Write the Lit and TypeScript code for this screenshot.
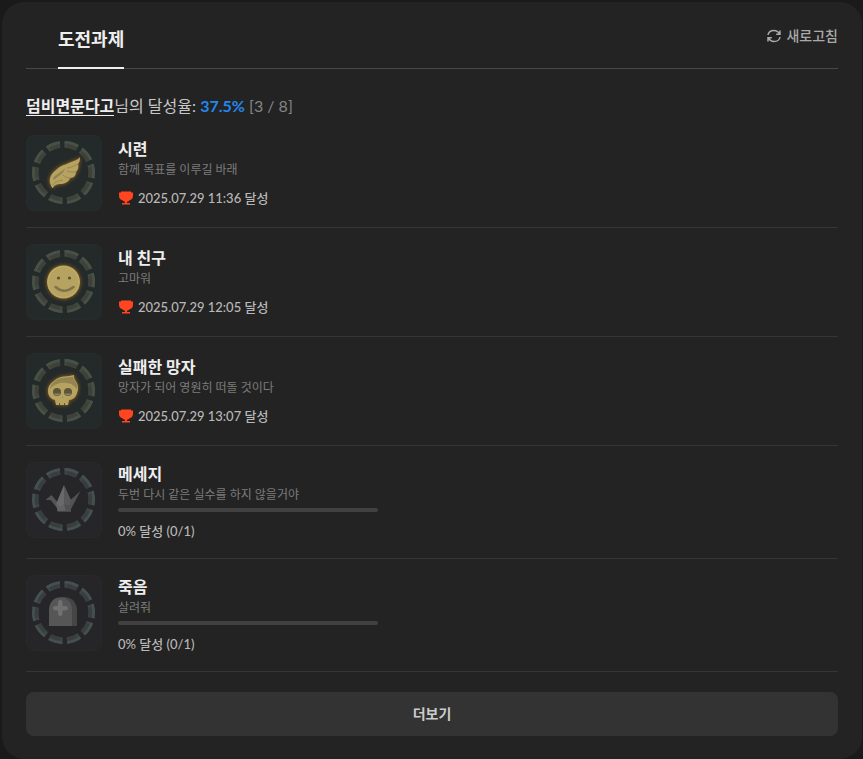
import { LitElement, html, svg, css, nothing } from "lit";
import { customElement, property, state } from "lit/decorators.js";
import { classMap } from "lit/directives/class-map.js";

type Emblem = "wing" | "smile" | "skull" | "crane" | "tomb";

interface Achievement {
  title: string;
  note: string;
  emblem: Emblem;
  achievedAt?: string;
  progress?: number;
  goal?: number;
}

const point = (radius: number, degrees: number) => {
  const a = (degrees * Math.PI) / 180;
  return `${(37.5 + radius * Math.cos(a)).toFixed(2)} ${(37.5 + radius * Math.sin(a)).toFixed(2)}`;
};

const arcBand = (inner: number, outer: number, from: number, to: number) =>
  `M${point(outer, from)}A${outer} ${outer} 0 0 1 ${point(outer, to)}` +
  `L${point(inner, to)}A${inner} ${inner} 0 0 0 ${point(inner, from)}Z`;

const segments = Array.from({ length: 10 }, (_, i) => i * 36 - 92);

const emblems = {
  wing: svg`
    <path class="gold" d="M54 22C52 25 47 26 43 28C38 30 34 31 30 35C25 39 23 43 24 48C25 51 26 53 27 53C28 50 31 49 34 49C38 49 43 47 44 43C48 43 50 40 50 37C52 35 53 32 52 29C54 27 54 24 54 22Z"/>
    <path class="shade" d="M27 43C30 39 36 37 39 33C38 39 32 41 28 45Z"/>
    <path class="vein" d="M52 29C48 31 44 33 41 33M50 37C46 37 44 37 41 36M44 43C41 43 39 42 37 40M27 50C29 46 33 46 37 45"/>`,
  smile: svg`
    <circle class="gold" cx="37.500" cy="38" r="16.500"/>
    <circle class="rim" cx="37.500" cy="38" r="15.500"/>
    <circle class="ink" cx="32.500" cy="34" r="1.600"/><circle class="ink" cx="43.500" cy="34" r="1.600"/>
    <path class="mouth" d="M29.500 43Q38 50.500 47.500 43"/>`,
  skull: svg`
    <path class="gold" d="M48 22C42 24 35 22 29 27C25 30 22 33 22 38C22 43 25 46 29 47L30 52H33V50H34V52H38V50H39V52H42L43 47C47 47 50 44 51 40C53 35 52 31 49 27C48 25 48 24 48 22Z"/>
    <path class="shade" d="M47 23.500C42 25 35 23.500 29 28C26 30 24 33 24 36C28 31 35 29 40 30C45 30 49 33 51 36C52 32 50 29 48 27Z"/>
    <circle class="ink" cx="31" cy="39" r="4"/><circle class="ink" cx="42" cy="39" r="4"/>
    <path class="shade" d="M27.500 40.500A4 4 0 0 0 34.500 40.500ZM38.500 40.500A4 4 0 0 0 45.500 40.500ZM36 45L36.700 43L37.400 45Z"/>`,
  crane: svg`
    <path fill="#545454" d="M19.500 38L25.500 33L33 42L31 46L24.500 38Z"/>
    <path fill="#525252" d="M40 42L54.500 29L45 47L41 49Z"/>
    <path fill="#696969" d="M38 23L30 42L32 48L38 43Z"/>
    <path fill="#585858" d="M38 23L45 38L44 43L38 43Z"/>
    <path fill="#626262" d="M30 41L34 45L38 42L44 46L45 49.500H31.500Z"/>
    <path fill="#515151" d="M38 42L45 46V49.500H40Z"/>`,
  tomb: svg`
    <path fill="#454545" d="M36 22C45 21 51 27 51 35V51H36Z"/>
    <path fill="#565656" d="M23 51V35C23 18 46 18 46 35V51Z"/>
    <path fill="#707070" d="M34 25Q36.500 25 36.500 28V31H39Q42 31 42 33Q42 35.500 39 35.500H36.500V38Q36.500 41 34 41Q32 41 32 38V35.500H30Q27 35.500 27 33Q27 31 30 31H32V28Q32 25 34 25Z"/>`,
};

@customElement("achievement-badge")
class AchievementBadge extends LitElement {
  @property() emblem: Emblem = "wing";
  @property({ type: Boolean }) earned = false;

  static styles = css`
    :host { display: block; flex: none; width: 76px; height: 76px; }
    .badge { display: block; width: 100%; height: 100%; border-radius: 8px; background: #262527; box-shadow: inset 0 0 0 1px #29282a; }
    .badge.earned { background: #242a2a; box-shadow: inset 0 0 0 1px #262c2c; }
    .slab { fill: #3e4646; }
    .core { fill: #393d3d; }
    .light { fill: #455050; }
    .earned .slab { fill: #414a40; }
    .earned .core { fill: #403f3a; }
    .earned .light { fill: #475247; }
    .earned .figure { filter: drop-shadow(0 0 2px #a36d18); }
    .gold { fill: #b7a361; }
    .shade { fill: #938452; }
    .vein { fill: none; stroke: #968753; stroke-width: 1; }
    .rim { fill: none; stroke: #c3ad68; stroke-width: 1; }
    .ink { fill: #5c5439; }
    .mouth { fill: none; stroke: #807349; stroke-width: 2.5; stroke-linecap: round; }
  `;

  render() {
    return html`<svg class=${classMap({ badge: true, earned: this.earned })} viewBox="0 0 76 76" aria-hidden="true">
      ${segments.map(
        (a) => svg`
          <path class="slab" d=${arcBand(25, 31.5, a + 4, a + 31)}/>
          <path class="light" d=${arcBand(29, 31.5, a + 4, a + 31)}/>
          <path class="core" d=${arcBand(25.5, 28.5, a + 9, a + 30)}/>`
      )}
      <g class="figure">${emblems[this.emblem]}</g>
    </svg>`;
  }
}

@customElement("achievement-row")
class AchievementRow extends LitElement {
  @property({ attribute: false }) item!: Achievement;

  static styles = css`
    :host { display: block; }
    .row { display: flex; gap: 16px; padding: 16px 0; border-bottom: 1px solid #363636; }
    .body { flex: 1; min-width: 0; }
    .body.earned { align-self: center; }
    .title { margin: 0; font-size: 16px; line-height: 24px; font-weight: 700; color: #eee; }
    .note { margin: 0; font-size: 12px; line-height: 18px; color: #7c7c7c; }
    .status { display: flex; align-items: center; gap: 4px; margin: 8px 0 0; font-size: 13px; line-height: 22px; font-weight: 500; color: #b8b8b8; }
    .cup { width: 16px; height: 16px; flex: none; fill: #ff4620; }
    .track { max-width: 260px; height: 4px; margin-top: 4px; border-radius: 2px; background: #414141; overflow: hidden; }
    .fill { height: 100%; background: #2b8cee; }
  `;

  render() {
    const { title, note, emblem, achievedAt, progress = 0, goal = 1 } = this.item;
    const earned = !!achievedAt;
    const percent = Math.round((progress / goal) * 100);
    return html`<div class="row">
      <achievement-badge .emblem=${emblem} .earned=${earned}></achievement-badge>
      <div class=${classMap({ body: true, earned })}>
        <h3 class="title">${title}</h3>
        <p class="note">${note}</p>
        ${earned
          ? nothing
          : html`<div class="track" role="progressbar" aria-label=${title} aria-valuenow=${percent} aria-valuemin="0" aria-valuemax="100">
              <div class="fill" style="width:${percent}%"></div>
            </div>`}
        <p class="status">
          ${earned
            ? html`<svg class="cup" viewBox="0 0 16 16" aria-hidden="true">
                  <path d="M3 1.500h10V2.500H15V5.500C15 8 14 9.500 12 10C11 11 10 11.500 9 11.700V13H12v1.500H4V13h3v-1.300C6 11.500 5 11 4 10C2 9.500 1 8 1 5.500V2.500h2Z"/>
                </svg><span>${achievedAt} 달성</span>`
            : html`<span>${percent}% 달성 (${progress}/${goal})</span>`}
        </p>
      </div>
    </div>`;
  }
}

@customElement("app-root")
class AppRoot extends LitElement {
  @state() private items: Achievement[] = [
    { title: "시련", note: "함께 목표를 이루길 바래", emblem: "wing", achievedAt: "2025.07.29 11:36" },
    { title: "내 친구", note: "고마워", emblem: "smile", achievedAt: "2025.07.29 12:05" },
    { title: "실패한 망자", note: "망자가 되어 영원히 떠돌 것이다", emblem: "skull", achievedAt: "2025.07.29 13:07" },
    { title: "메세지", note: "두번 다시 같은 실수를 하지 않을거야", emblem: "crane", progress: 0, goal: 1 },
    { title: "죽음", note: "살려줘", emblem: "tomb", progress: 0, goal: 1 },
  ];

  static styles = css`
    :host { display: block; box-sizing: border-box; min-height: 100vh; padding: 2px 1px 0 2px; background: #1a1a1a; color: #c8c8c8; font-family: Lato, "Noto Sans CJK KR", sans-serif; }
    .card { padding: 24px 24px 23px; border-radius: 22px; background: #232323; }
    .head { display: flex; align-items: flex-start; justify-content: space-between; padding-left: 32px; border-bottom: 1px solid #484848; }
    .tab { margin: 0 0 -1px; padding-bottom: 15px; border-bottom: 2px solid #eee; font-size: 18px; line-height: 26px; font-weight: 700; color: #eee; }
    .refresh { display: flex; align-items: center; gap: 4px; padding: 0; border: 0; background: none; font: 500 14px/20px Lato, "Noto Sans CJK KR", sans-serif; color: #aaa; cursor: pointer; }
    .arrows { width: 16px; height: 16px; fill: none; stroke: currentColor; stroke-width: 1.5; }
    .summary { margin: 24px 0 0; font-size: 16px; line-height: 26px; color: #c8c8c8; }
    .user { color: #eee; font-weight: 700; text-decoration: none; border-bottom: 1px solid #eee; }
    .rate { color: #2388ee; font-weight: 700; }
    .count { color: #858585; }
    .more { display: block; width: 100%; height: 44px; margin-top: 20px; padding: 0; border: 0; border-radius: 8px; background: #333; font: 700 14px/20px Lato, "Noto Sans CJK KR", sans-serif; color: #ccc; cursor: pointer; }
  `;

  render() {
    return html`<main class="card">
      <header class="head">
        <h2 class="tab">도전과제</h2>
        <button class="refresh" type="button">
          <svg class="arrows" viewBox="0 0 16 16" aria-hidden="true">
            <path d="M2 7C2.500 4 5 2.500 8 2.500C10.500 2.500 12.300 3.800 13.300 5.800M14 2.500V6.300H10.200M14 9C13.500 12 11 13.500 8 13.500C5.500 13.500 3.700 12.200 2.700 10.200M2 13.500V9.700H5.800"/>
          </svg>
          <span>새로고침</span>
        </button>
      </header>
      <p class="summary"><a class="user" href="#">덤비면문다고</a>님의 달성율: <span class="rate">37.5%</span> <span class="count">[3 / 8]</span></p>
      <section>${this.items.map((item) => html`<achievement-row .item=${item}></achievement-row>`)}</section>
      <button class="more" type="button">더보기</button>
    </main>`;
  }
}
